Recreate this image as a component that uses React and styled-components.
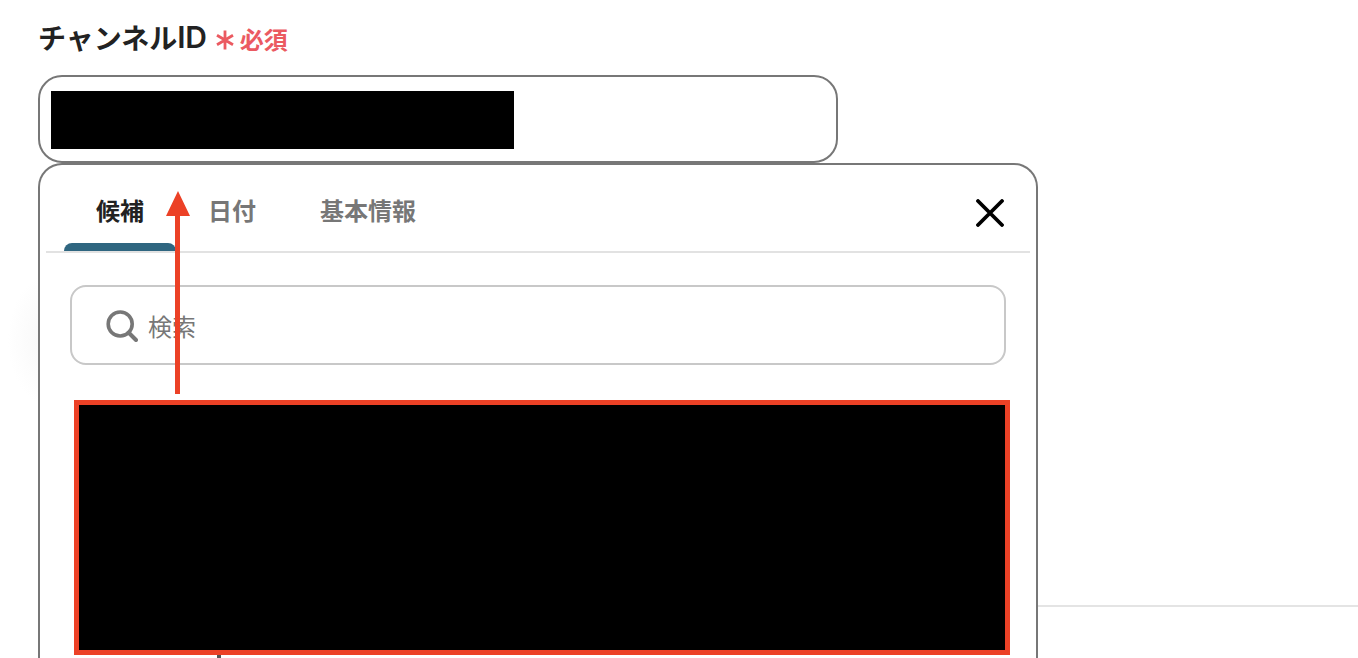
import React from 'react';
import { useState } from 'react';
import styled, { createGlobalStyle } from 'styled-components';

const GlobalStyle = createGlobalStyle`
  * {
    box-sizing: border-box;
  }

  body {
    margin: 0;
    background: #ffffff;
    color: #222222;
    font-family: "Liberation Sans", "Noto Sans CJK JP", sans-serif;
  }
`;

const Page = styled.div`
  position: relative;
  width: 1358px;
  height: 658px;
  padding: 17px 0 0 38px;
  overflow: hidden;
  display: flex;
  flex-direction: column;
`;

const Glow = styled.div`
  position: absolute;
  left: 8px;
  top: 275px;
  width: 80px;
  height: 130px;
  background: radial-gradient(closest-side, #f7f7f7, #ffffff);
`;

const Label = styled.label`
  display: flex;
  align-items: center;
  height: 40px;
  font-size: 28px;
  font-weight: 700;
  white-space: nowrap;
`;

const Latin = styled.span`
  font-family: Inter, sans-serif;
  font-weight: 600;
  font-size: 30px;
  line-height: 36px;
  letter-spacing: -0.2px;
`;

const Required = styled.span`
  display: flex;
  align-items: center;
  gap: 6px;
  margin: 2px 0 0 9px;
  color: #eb5a61;
  font-size: 24px;
`;

const Asterisk = styled.svg`
  width: 18px;
  height: 20px;
  margin-top: 4px;
`;

const Field = styled.div`
  flex: none;
  width: 800px;
  height: 88px;
  margin-top: 18px;
  padding: 14px 11px;
  border: 2px solid #777777;
  border-radius: 24px;
`;

const FieldValue = styled.div`
  width: 463px;
  height: 58px;
  background: #000000;
`;

const Lower = styled.div`
  display: flex;
  flex: 1;
`;

const Panel = styled.div`
  position: relative;
  width: 1000px;
  border: 2px solid #777777;
  border-bottom: 0;
  border-radius: 24px 24px 0 0;
  background: #ffffff;
`;

const Divider = styled.div`
  flex: 1;
  height: 2px;
  margin-top: 442px;
  background: #e4e4e4;
`;

const TabBar = styled.div`
  display: flex;
  height: 88px;
  margin: 0 6px;
  padding: 0 26px 0 18px;
  border-bottom: 2px solid #e2e2e2;
`;

const Tab = styled.button`
  display: flex;
  flex-direction: column;
  align-items: center;
  justify-content: flex-end;
  padding: 0 32px;
  border: 0;
  background: none;
  color: ${({ $active }) => ($active ? '#222222' : '#777777')};
  font: inherit;
  font-size: 24px;
  line-height: 36px;
  font-weight: 700;
  cursor: pointer;
`;

const TabLine = styled.span`
  align-self: stretch;
  height: 8px;
  margin: 13px -32px 0;
  border-radius: 8px 8px 0 0;
  background: ${({ $active }) => ($active ? '#2f6680' : 'transparent')};
`;

const CloseButton = styled.button`
  display: flex;
  margin: 34px 0 0 auto;
  padding: 0;
  width: 28px;
  height: 28px;
  border: 0;
  background: none;
  cursor: pointer;
`;

const SearchBox = styled.div`
  display: flex;
  align-items: center;
  height: 80px;
  margin: 32px 30px 0;
  padding-left: 34px;
  border: 2px solid #c8c8c8;
  border-radius: 16px;
`;

const SearchIcon = styled.svg`
  width: 32px;
  height: 32px;
  margin-top: 2px;
`;

const SearchInput = styled.input`
  flex: 1;
  height: 40px;
  padding: 0;
  margin: 5px 0 0 10px;
  border: 0;
  outline: 0;
  background: none;
  font-family: inherit;
  font-size: 24px;

  &::placeholder {
    color: #777777;
    opacity: 1;
  }
`;

const Results = styled.div`
  height: 255px;
  margin: 35px 26px 0 34px;
  border: 5px solid #ec4126;
  background: #000000;
`;

const Remainder = styled.div`
  width: 4px;
  height: 3px;
  margin-left: 177px;
  background: #555555;
`;

const Arrow = styled.svg`
  position: absolute;
  left: 126px;
  top: 26px;
  width: 24px;
  height: 203px;
  pointer-events: none;
`;

const tabs = ['候補', '日付', '基本情報'];

const App = () => {
  const [active, setActive] = useState('候補');

  return (
    <>
      <GlobalStyle />
      <Page>
        <Glow />
        <Label>
          チャンネル<Latin>ID</Latin>
          <Required>
            <Asterisk viewBox="0 0 18 20" fill="none" stroke="currentColor" strokeWidth="2.8">
              <path d="M9 0.5v19M1 5.2l16 9.6M17 5.2L1 14.8" />
            </Asterisk>
            必須
          </Required>
        </Label>
        <Field>
          <FieldValue />
        </Field>
        <Lower>
          <Panel>
            <TabBar>
              {tabs.map((tab) => (
                <Tab key={tab} $active={tab === active} onClick={() => setActive(tab)}>
                  {tab}
                  <TabLine $active={tab === active} />
                </Tab>
              ))}
              <CloseButton aria-label="閉じる">
                <svg width="28" height="28" viewBox="0 0 28 28" stroke="#000000" strokeWidth="3.8" strokeLinecap="round">
                  <path d="M2 2l24 24M26 2L2 26" />
                </svg>
              </CloseButton>
            </TabBar>
            <SearchBox>
              <SearchIcon viewBox="0 0 32 32" fill="none" stroke="#777777" strokeWidth="3.6">
                <circle cx="14.2" cy="14" r="12" />
                <path d="M22.5 22.5l7.5 7.5" strokeWidth="4" strokeLinecap="round" />
              </SearchIcon>
              <SearchInput placeholder="検索" />
            </SearchBox>
            <Results />
            <Remainder />
            <Arrow viewBox="0 0 24 203" fill="#ec4126">
              <path d="M12 0l12 25H14v178H9V25H0z" />
            </Arrow>
          </Panel>
          <Divider />
        </Lower>
      </Page>
    </>
  );
};

export default App;
